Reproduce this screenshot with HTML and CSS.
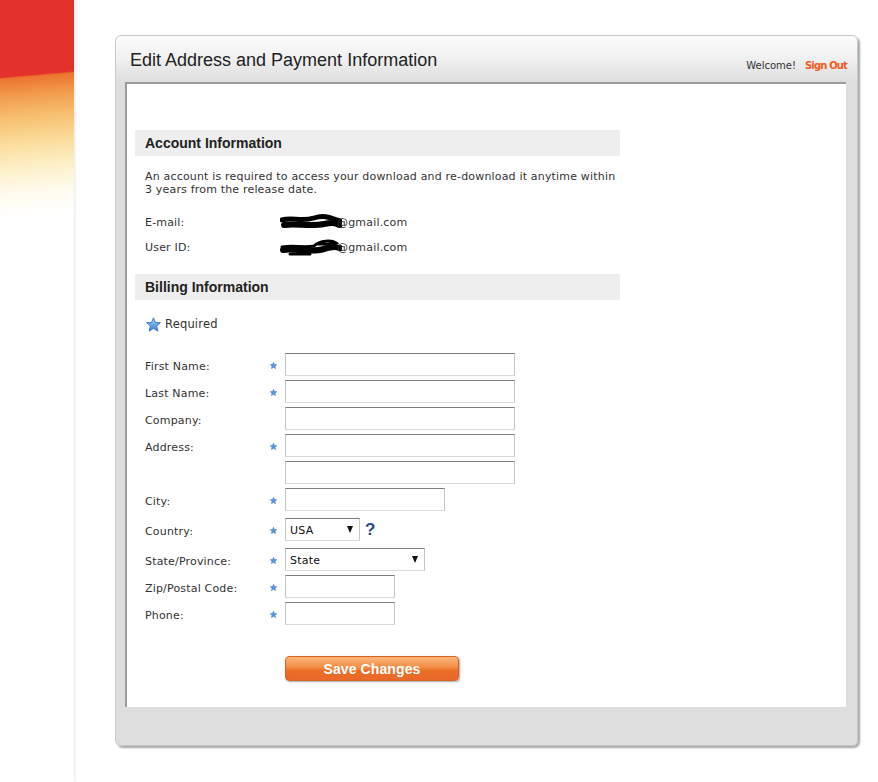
FILE: index.html
```html
<!DOCTYPE html>
<html>
<head>
<meta charset="utf-8">
<title>Edit Address and Payment Information</title>
<link rel="stylesheet" href="styles.css">
</head>
<body>
<div class="page">
  <aside class="brand-strip"></aside>
  <main class="main">
    <section class="panel">
      <header class="panel-head">
        <h1 class="panel-title">Edit Address and Payment Information</h1>
        <div class="user-links"><span class="welcome">Welcome!</span><a class="signout" href="#">Sign Out</a></div>
      </header>
      <div class="panel-body">
        <div class="frame">
          <h2 class="section-bar first">Account Information</h2>
          <p class="intro">An account is required to access your download and re-download it anytime within<br>3 years from the release date.</p>
          <div class="info-row">
            <span class="info-label">E-mail:</span>
            <span class="info-value"><svg class="redact" width="62" height="18" viewBox="0 0 62 18"><path d="M2 7 C12 4 22 9 34 5 S52 6 60 8" fill="none" stroke="#000" stroke-width="5" stroke-linecap="round"/><path d="M4 12 C16 10 30 14 44 11 S56 12 60 12" fill="none" stroke="#000" stroke-width="6" stroke-linecap="round"/></svg>@gmail.com</span>
          </div>
          <div class="info-row">
            <span class="info-label">User ID:</span>
            <span class="info-value"><svg class="redact" width="62" height="18" viewBox="0 0 62 18"><path d="M2 9 C14 7 24 10 34 8 C40 2 52 2 56 5 C50 7 44 6 38 6" fill="none" stroke="#000" stroke-width="3" stroke-linecap="round"/><path d="M3 12 C16 10 30 15 44 11 S56 10 60 10" fill="none" stroke="#000" stroke-width="6" stroke-linecap="round"/><path d="M10 16 L30 16" stroke="#000" stroke-width="3" stroke-linecap="round"/></svg>@gmail.com</span>
          </div>
          <h2 class="section-bar">Billing Information</h2>
          <div class="required-note">
            <svg class="star-lg" width="15" height="15" viewBox="0 0 10 10"><defs><linearGradient id="sg" x1="0" y1="0" x2="0" y2="1"><stop offset="0" stop-color="#a8d4fa"/><stop offset="1" stop-color="#3b7fd4"/></linearGradient></defs><polygon points="5,0.5 6.3,3.6 9.6,3.8 7.1,6 7.9,9.4 5,7.6 2.1,9.4 2.9,6 0.4,3.8 3.7,3.6" fill="url(#sg)" stroke="#3a72c0" stroke-width="0.6" stroke-linejoin="round"/></svg>
            <span>Required</span>
          </div>
          <form class="billing">
            <div class="form-row"><label class="f-label">First Name:</label><span class="req"><svg width="7" height="7" viewBox="0 0 10 10"><polygon points="5,0.5 6.3,3.6 9.6,3.8 7.1,6 7.9,9.4 5,7.6 2.1,9.4 2.9,6 0.4,3.8 3.7,3.6" fill="#5b9ae0" stroke="#3a72c0" stroke-width="0.8"/></svg></span><input class="txt w-lg" type="text"></div>
            <div class="form-row"><label class="f-label">Last Name:</label><span class="req"><svg width="7" height="7" viewBox="0 0 10 10"><polygon points="5,0.5 6.3,3.6 9.6,3.8 7.1,6 7.9,9.4 5,7.6 2.1,9.4 2.9,6 0.4,3.8 3.7,3.6" fill="#5b9ae0" stroke="#3a72c0" stroke-width="0.8"/></svg></span><input class="txt w-lg" type="text"></div>
            <div class="form-row"><label class="f-label">Company:</label><span class="req"></span><input class="txt w-lg" type="text"></div>
            <div class="form-row"><label class="f-label">Address:</label><span class="req"><svg width="7" height="7" viewBox="0 0 10 10"><polygon points="5,0.5 6.3,3.6 9.6,3.8 7.1,6 7.9,9.4 5,7.6 2.1,9.4 2.9,6 0.4,3.8 3.7,3.6" fill="#5b9ae0" stroke="#3a72c0" stroke-width="0.8"/></svg></span><input class="txt w-lg" type="text"></div>
            <div class="form-row"><span class="f-label"></span><span class="req"></span><input class="txt w-lg" type="text"></div>
            <div class="form-row"><label class="f-label">City:</label><span class="req"><svg width="7" height="7" viewBox="0 0 10 10"><polygon points="5,0.5 6.3,3.6 9.6,3.8 7.1,6 7.9,9.4 5,7.6 2.1,9.4 2.9,6 0.4,3.8 3.7,3.6" fill="#5b9ae0" stroke="#3a72c0" stroke-width="0.8"/></svg></span><input class="txt w-md" type="text"></div>
            <div class="form-row spaced"><label class="f-label">Country:</label><span class="req"><svg width="7" height="7" viewBox="0 0 10 10"><polygon points="5,0.5 6.3,3.6 9.6,3.8 7.1,6 7.9,9.4 5,7.6 2.1,9.4 2.9,6 0.4,3.8 3.7,3.6" fill="#5b9ae0" stroke="#3a72c0" stroke-width="0.8"/></svg></span>
              <div class="field-inline">
                <div class="sel-wrap w-country"><select class="sel"><option>USA</option></select><span class="sel-arrow"></span></div>
                <span class="help">?</span>
              </div>
            </div>
            <div class="form-row spaced"><label class="f-label">State/Province:</label><span class="req"><svg width="7" height="7" viewBox="0 0 10 10"><polygon points="5,0.5 6.3,3.6 9.6,3.8 7.1,6 7.9,9.4 5,7.6 2.1,9.4 2.9,6 0.4,3.8 3.7,3.6" fill="#5b9ae0" stroke="#3a72c0" stroke-width="0.8"/></svg></span>
              <div class="sel-wrap w-state"><select class="sel"><option>State</option></select><span class="sel-arrow"></span></div>
            </div>
            <div class="form-row"><label class="f-label">Zip/Postal Code:</label><span class="req"><svg width="7" height="7" viewBox="0 0 10 10"><polygon points="5,0.5 6.3,3.6 9.6,3.8 7.1,6 7.9,9.4 5,7.6 2.1,9.4 2.9,6 0.4,3.8 3.7,3.6" fill="#5b9ae0" stroke="#3a72c0" stroke-width="0.8"/></svg></span><input class="txt w-sm" type="text"></div>
            <div class="form-row"><label class="f-label">Phone:</label><span class="req"><svg width="7" height="7" viewBox="0 0 10 10"><polygon points="5,0.5 6.3,3.6 9.6,3.8 7.1,6 7.9,9.4 5,7.6 2.1,9.4 2.9,6 0.4,3.8 3.7,3.6" fill="#5b9ae0" stroke="#3a72c0" stroke-width="0.8"/></svg></span><input class="txt w-sm" type="text"></div>
            <div class="actions"><button class="save-btn" type="button">Save Changes</button></div>
          </form>
        </div>
      </div>
      <div class="panel-foot"></div>
    </section>
  </main>
</div>
</body>
</html>
```

FILE: styles.css
```css
* { box-sizing: border-box; }
html, body { margin: 0; padding: 0; background: #fff; }
body {
  font-family: "DejaVu Sans", Verdana, sans-serif;
  font-size: 11px;
  letter-spacing: 0.18px;
  color: #333;
  overflow: hidden;
}
.page {
  display: flex;
  min-height: 782px;
}
.brand-strip {
  width: 74px;
  flex: 0 0 74px;
  min-height: 782px;
  background: linear-gradient(175deg, #e3322b 0, #e3322b 77px, #ec7430 79px, #f29a4c 96px, #f7c070 119px, #fbdc9c 144px, #fdf0c8 169px, #fffbee 194px, #ffffff 219px);
  box-shadow: 1px 0 2px rgba(0,0,0,0.10);
}
.main {
  padding: 35px 0 0 41px;
}
.panel {
  width: 743px;
  border: 1px solid #c9c9c9;
  border-radius: 6px;
  background: linear-gradient(#fcfcfc 0, #f2f2f2 20px, #dedede 46px, #dedede 100%);
  box-shadow: 2px 2px 2px rgba(0,0,0,0.35);
}
.panel-head {
  height: 46px;
  display: flex;
  justify-content: space-between;
  align-items: flex-start;
  padding: 13px 10px 0 14px;
}
.panel-title {
  margin: 0;
  font-family: "Liberation Sans", Arial, sans-serif;
  font-weight: normal;
  font-size: 18px;
  letter-spacing: 0;
  line-height: 22px;
  color: #222;
}
.user-links {
  margin-top: 11px;
  line-height: 12px;
  font-size: 10px;
  letter-spacing: 0;
  display: flex;
  gap: 9px;
}
.welcome { color: #333; }
.signout {
  color: #f15a24;
  font-weight: bold;
  text-decoration: none;
  letter-spacing: -0.85px;
}
.panel-body {
  padding: 0 11px 0 9px;
}
.frame {
  background: #fff;
  border-top: 2px solid #9c9c9c;
  border-left: 2px solid #9c9c9c;
  padding: 0 0 26px 8px;
}
.section-bar {
  width: 485px;
  height: 26px;
  margin: 19px 0 0;
  padding-left: 10px;
  background: #eeeeee;
  font-family: "Liberation Sans", Arial, sans-serif;
  font-size: 14px;
  font-weight: bold;
  letter-spacing: 0;
  line-height: 26px;
  color: #222;
}
.section-bar.first { margin-top: 46px; }
.intro {
  margin: 14px 0 0;
  padding-left: 10px;
  line-height: 13px;
  color: #333;
}
.info-row {
  display: flex;
  align-items: center;
  height: 16px;
  padding-left: 10px;
  margin-top: 9px;
}
.intro + .info-row { margin-top: 18px; }
.info-label { width: 135px; }
.info-value {
  display: flex;
  align-items: center;
}
.redact { margin-right: -5px; margin-left: 0; }
.required-note {
  display: flex;
  align-items: center;
  gap: 4px;
  height: 16px;
  margin-top: 16px;
  padding-left: 11px;
  font-size: 11.5px;
  color: #333;
}
.billing {
  margin-top: 21px;
  padding-left: 10px;
}
.form-row {
  display: grid;
  grid-template-columns: 125px 15px auto;
  align-items: center;
  height: 23px;
  margin-bottom: 4px;
}
.form-row.spaced { margin-top: 7px; }
.f-label { padding-top: 4px; color: #333; }
.req {
  display: flex;
  align-items: center;
  height: 23px;
  padding-left: 0;
  padding-top: 1px;
}
.txt {
  height: 23px;
  border: 1px solid;
  border-color: #7e7e7e #c6c6c6 #dadada #c6c6c6;
  background: #fff;
  padding: 0 4px;
  margin: 0;
  font: inherit;
  outline: none;
}
.w-lg { width: 230px; }
.w-md { width: 160px; }
.w-sm { width: 110px; }
.field-inline {
  display: flex;
  align-items: center;
  gap: 5px;
}
.sel-wrap {
  position: relative;
  height: 23px;
}
.w-country { width: 75px; }
.w-state { width: 140px; }
.sel {
  -webkit-appearance: none;
  appearance: none;
  width: 100%;
  height: 23px;
  border: 1px solid;
  border-color: #7e7e7e #c6c6c6 #dadada #c6c6c6;
  background: #fff;
  padding: 2px 0 0 4px;
  margin: 0;
  font-family: "DejaVu Sans", Verdana, sans-serif;
  font-size: 11px;
  letter-spacing: 0.2px;
  color: #111;
  border-radius: 0;
  outline: none;
}
.sel-arrow {
  position: absolute;
  right: 7px;
  top: 8px;
  width: 0;
  height: 0;
  border-left: 3px solid transparent;
  border-right: 3px solid transparent;
  border-top: 7px solid #111;
}
.help {
  font-family: "Liberation Sans", Arial, sans-serif;
  font-weight: bold;
  font-size: 17px;
  color: #2b4a86;
  line-height: 17px;
}
.actions {
  margin-top: 31px;
  padding-left: 140px;
}
.save-btn {
  width: 174px;
  height: 25px;
  border: 1px solid #d9621f;
  border-radius: 4px;
  background: linear-gradient(#fbb77c 0, #f38c44 45%, #ea6d26 60%, #e8692a 100%);
  box-shadow: 1px 1px 2px rgba(0,0,0,0.35);
  color: #fff;
  font-family: "Liberation Sans", Arial, sans-serif;
  font-weight: bold;
  font-size: 14px;
  letter-spacing: 0.1px;
  padding: 0;
  cursor: pointer;
}
.panel-foot {
  height: 38px;
}
```
